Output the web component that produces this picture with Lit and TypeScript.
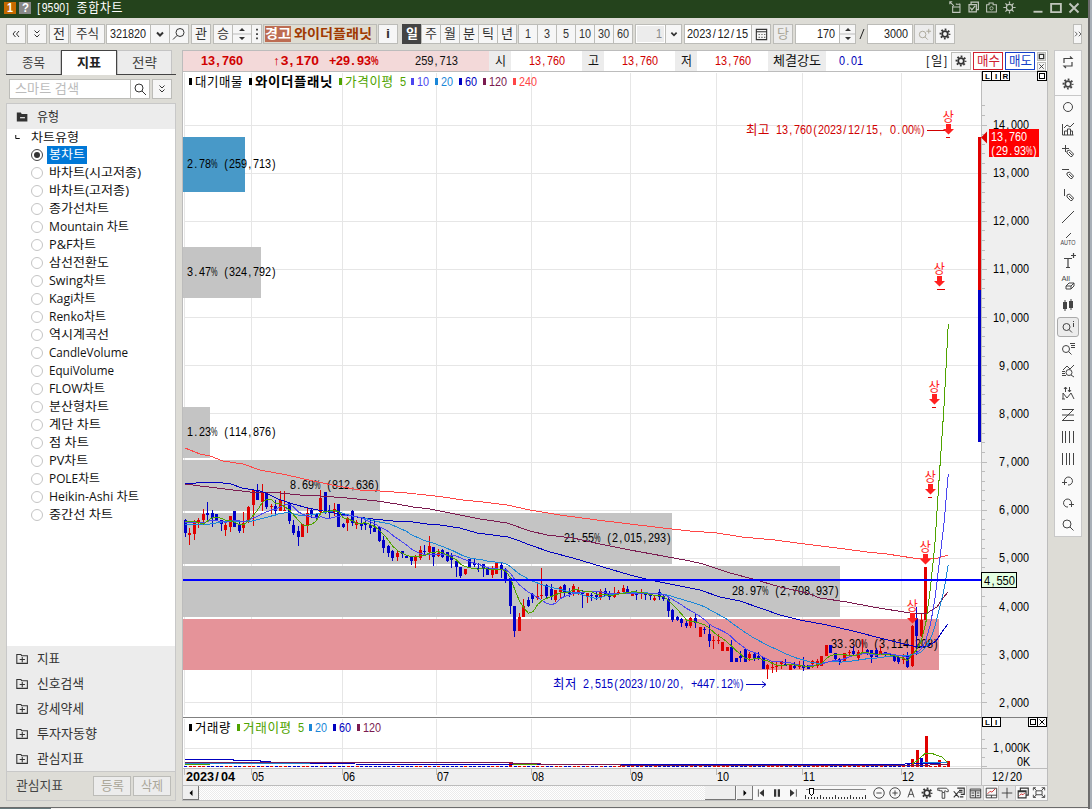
import { css, html, LitElement, svg } from "lit";
import type { SVGTemplateResult } from "lit";
import { customElement, property, state } from "lit/decorators.js";
import { classMap } from "lit/directives/class-map.js";

const fit = (text: string, width: number, cls = "") => html`
	<svg class="fit ${cls}" width=${width} height="16">
		<text x="0" y="11.500" textLength=${width} lengthAdjust="spacingAndGlyphs">${text}</text>
	</svg>
`;

const isHangul = (char: string) => /[\uac00-\ud7a3]/.test(char);

// Narrow glyphs are nudged towards the middle of their cell
const nudge: Record<string, number> = {
	",": 1.2,
	".": 1.2,
	"(": 1.2,
	"[": 1.2,
	")": 1,
	"]": 1,
	"/": 1.3,
};

// Hangul takes two cells, everything else one
const cellText = (
	x: number,
	y: number,
	width: number,
	text: string,
	color = "currentColor",
	cls = "",
) => {
	const chars = [...text];
	const total = chars.reduce((sum, char) => sum + (isHangul(char) ? 2 : 1), 0);
	const unit = width / total;
	const scale = unit / 7.2;
	let cell = 0;
	const spans = chars.map((char) => {
		const at = (cell * unit + (nudge[char] ?? 0)) / scale;
		if (isHangul(char)) {
			cell += 2;
			return svg`<tspan x=${at} textLength=${(unit * 2 - 0.6) / scale} lengthAdjust="spacingAndGlyphs">${char}</tspan>`;
		}
		cell += 1;
		return char === "%"
			? svg`<tspan x=${at} textLength="7.800" lengthAdjust="spacingAndGlyphs">${char}</tspan>`
			: svg`<tspan x=${at}>${char}</tspan>`;
	});
	return svg`<text class=${cls} fill=${color} transform="translate(${x} ${y}) scale(${scale} 1)">${spans}</text>`;
};

const mono = (text: string, width: number, cls = "") => html`
	<svg class="fit ${cls}" width=${width} height="16">${cellText(0, 11.5, width, text)}</svg>
`;

const icon = (body: SVGTemplateResult, size = 16) => html`
	<svg class="icon" width=${size} height=${size} viewBox="0 0 16 16">${body}</svg>
`;

const gear = svg`
	<circle cx="8" cy="8" r="3.2" stroke-width="2" />
	<circle cx="8" cy="8" r="5.2" stroke-width="2" stroke-dasharray="2.04 2.04" stroke-dashoffset="1" />
`;
const lens = svg`<circle cx="7" cy="7" r="4" /><path d="M10 10l4 4" />`;
const lensLeft = svg`<circle cx="9" cy="6.5" r="4" /><path d="M6 9.5l-4 4" />`;
const chevron = svg`<path d="M5 6.5l3 3 3-3" stroke-width="2" />`;
const doubleDown = svg`<path d="M5.5 4.500l2.500 2.500 2.500-2.500M5.500 8.500l2.500 2.500 2.500-2.500" />`;
const doubleLeft = svg`<path d="M7.500 5l-2.500 3 2.500 3M11 5l-2.500 3 2.500 3" />`;
const spinner = svg`
	<path class="solid" d="M5 5l3-3 3 3zM5 11l3 3 3-3z" />
	<path class="hair" d="M-2 8h20" />
`;
const pencil = svg`<path d="M7 8l2.500-1 4 4-1.500 2.500-1.500 0-3.500-3.500zM9 9l3 3" />`;

const base = css`
	* {
		box-sizing: border-box;
	}

	svg {
		display: block;
		flex: none;
	}

	.fit {
		overflow: visible;
		fill: currentColor;
		font-family: "Liberation Sans", "Noto Sans CJK KR", sans-serif;
		font-size: 13px;
	}

	.bold {
		font-weight: 700;
	}

	.icon {
		fill: none;
		stroke: currentColor;
		stroke-width: 1;
		overflow: visible;
	}

	.icon .solid {
		fill: currentColor;
		stroke: none;
	}

	.icon .hair {
		stroke: #bbb;
	}

	.icon text {
		fill: currentColor;
		stroke: none;
		font-family: "Liberation Sans", sans-serif;
	}

	.btn {
		display: flex;
		align-items: center;
		justify-content: center;
		flex: none;
		width: 20px;
		height: 20px;
		padding: 0;
		border: 1px solid #bcbcb8;
		background: #f6f6f6;
		color: #333;
		overflow: hidden;
	}
`;

interface TreeItem {
	name: string;
	width: number;
}

const chartTypes: TreeItem[] = [
	{ name: "봉차트", width: 36 },
	{ name: "바차트(시고저종)", width: 92 },
	{ name: "바차트(고저종)", width: 80 },
	{ name: "종가선차트", width: 60 },
	{ name: "Mountain 차트", width: 80 },
	{ name: "P&F차트", width: 47 },
	{ name: "삼선전환도", width: 60 },
	{ name: "Swing차트", width: 57 },
	{ name: "Kagi차트", width: 47 },
	{ name: "Renko차트", width: 57 },
	{ name: "역시계곡선", width: 60 },
	{ name: "CandleVolume", width: 79 },
	{ name: "EquiVolume", width: 65 },
	{ name: "FLOW차트", width: 56 },
	{ name: "분산형차트", width: 60 },
	{ name: "계단 차트", width: 52 },
	{ name: "점 차트", width: 40 },
	{ name: "PV차트", width: 39 },
	{ name: "POLE차트", width: 51 },
	{ name: "Heikin-Ashi 차트", width: 90 },
	{ name: "중간선 차트", width: 64 },
];

const folders: TreeItem[] = [
	{ name: "지표", width: 23 },
	{ name: "신호검색", width: 47 },
	{ name: "강세약세", width: 47 },
	{ name: "투자자동향", width: 60 },
	{ name: "관심지표", width: 47 },
];

@customElement("side-panel")
export class SidePanel extends LitElement {
	static override styles = [
		base,
		css`
			:host {
				display: flex;
				flex-direction: column;
				width: 170px;
				height: 751px;
				color: #333;
			}

			.tabs {
				display: flex;
				flex: none;
				height: 25px;
				border-bottom: 1px solid #444;
			}

			.tab {
				display: flex;
				align-items: center;
				justify-content: center;
				width: 55px;
				height: 24px;
				border: 1px solid #c4c4c4;
				border-bottom: 0;
				background: #ececec;
				color: #444;
			}

			.tab.active {
				width: 56px;
				height: 25px;
				border-color: #444;
				background: #fff;
				color: #222;
			}

			.search {
				display: flex;
				flex: none;
				padding: 4px 0 0 3px;
				height: 28px;
			}

			.search .field {
				display: flex;
				align-items: center;
				width: 122px;
				height: 20px;
				padding-left: 5px;
				border: 1px solid #bcbcb8;
				background: #fff;
				color: #bbb;
			}

			.search .find {
				margin: 0 2px 0 -1px;
				background: #fff;
			}

			.head {
				display: flex;
				align-items: center;
				flex: none;
				gap: 8px;
				height: 26px;
				padding-left: 9px;
				border: 1px solid #c8c8c8;
				border-bottom: 0;
				background: #ececec;
			}

			.tree {
				flex: 1;
				border: solid #c8c8c8;
				border-width: 0 1px;
				background: #fff;
				color: #111;
			}

			.root,
			.item {
				display: flex;
				align-items: center;
				height: 18px;
			}

			.root {
				gap: 8px;
				height: 17px;
				padding-left: 8px;
			}

			.item {
				padding-left: 24px;
				gap: 4px;
			}

			.radio {
				display: flex;
				align-items: center;
				justify-content: center;
				width: 12px;
				height: 12px;
				border: 1px solid #c4c4c4;
				border-radius: 50%;
			}

			.on .radio {
				border-color: #444;
			}

			.on .radio::after {
				content: "";
				width: 6px;
				height: 6px;
				border-radius: 50%;
				background: #333;
			}

			.name {
				padding: 1px 2px;
			}

			.name .fit,
			.root .fit {
				font-family: "Open Sans", "Noto Sans CJK KR", sans-serif;
				font-size: 12px;
			}

			.on .name {
				background: #0078d7;
				color: #fff;
			}

			.folders {
				flex: none;
				height: 125px;
				border: solid #c8c8c8;
				border-width: 0 1px;
				background: #ececec;
			}

			.folder {
				display: flex;
				align-items: center;
				gap: 8px;
				height: 25px;
				padding-left: 9px;
			}

			.foot {
				display: flex;
				align-items: center;
				flex: none;
				height: 30px;
				padding: 0 4px 0 9px;
				border: 1px solid #c8c8c8;
				background: #dddcd6;
				color: #444;
			}

			.foot .btn {
				width: 38px;
				margin-left: 2px;
				background: #ececec;
				color: #aaa698;
			}

			.foot .first {
				margin-left: auto;
			}
		`,
	];

	@state()
	private selected = "봉차트";

	override render() {
		return html`
			<div class="tabs">
				<div class="tab">${fit("종목", 23)}</div>
				<div class="tab active">${fit("지표", 24, "bold")}</div>
				<div class="tab">${fit("전략", 25)}</div>
			</div>
			<div class="search">
				<div class="field">${fit("스마트 검색", 64)}</div>
				<button class="btn find">${icon(lens)}</button>
				<button class="btn">${icon(doubleDown)}</button>
			</div>
			<div class="head">
				${icon(svg`
					<path class="solid" d="M1 3h5l1 2h7v9h-13z" />
					<path d="M5 9.500h6" stroke="#fff" stroke-width="1.300" />
				`, 13)}
				${fit("유형", 22)}
			</div>
			<div class="tree">
				<div class="root">
					${icon(svg`<path d="M1.500 2v7h8" stroke-width="2" />`, 8)}
					${fit("차트유형", 48)}
				</div>
				${chartTypes.map(
					(item) => html`
						<div
							class=${classMap({ item: true, on: item.name === this.selected })}
							@click=${() => {
								this.selected = item.name;
							}}
						>
							<span class="radio"></span>
							<span class="name">${fit(item.name, item.width)}</span>
						</div>
					`,
				)}
			</div>
			<div class="folders">
				${folders.map(
					(folder) => html`
						<div class="folder">
							${icon(svg`<path d="M1 3h5l1 1.500h7v9.500h-13zM4.500 9.300h6.500M7.700 6v6.500" stroke-width="1.300" />`, 13)}
							${fit(folder.name, folder.width)}
						</div>
					`,
				)}
			</div>
			<div class="foot">
				${fit("관심지표", 47)}
				<button class="btn first">${fit("등록", 23)}</button>
				<button class="btn">${fit("삭제", 22)}</button>
			</div>
		`;
	}
}

// direction, high, low, body top, body bottom
type Candle = [string, number, number, number, number];

// Each run is packed as scaled rows: dir, high, low, top, bottom against a base line
const unpack = (baseY: number, rows: string): Candle[] =>
	rows
		.trim()
		.split(/\s*;\s*/)
		.filter((row) => row)
		.map((row) => {
			const [dir, ...nums] = row.split(" ");
			const [hi, lo, top, bottom] = nums.map((n) => Math.round(baseY + Number(n) / 3));
			return [dir, hi, lo, top, bottom];
		});

const candles: Candle[] = [
	...unpack(
		440,
		`B 236 291 239 279;R 264 315 279 285;R 240 300 243 282;R 234 264 240 249;R 207 250 222 241;
		B 186 246 218 225;B 210 261 219 235;B 222 240 222 240;B 240 273 240 252;R 249 288 255 270;
		R 228 276 228 261;B 213 262 213 261;B 246 279 255 273;R 216 279 249 264;R 198 250 201 240;
		R 150 258 150 196;B 132 180 153 180;R 132 214 160 186;B 159 208 159 201;R 192 222 198 202;
		B 180 222 198 213;R 154 213 180 213;R 153 213 210 213;B 186 252 189 243;B 240 285 255 279;
		B 258 318 273 291;R 252 291 252 291;R 204 279 218 255;B 204 235 210 222;B 220 237 222 231;
		R 150 225 174 216;B 156 222 156 219;B 195 237 210 219;R 189 228 208 216;B 192 261 192 261;
		B 249 264 252 262;R 231 273 234 249;B 210 258 213 249;R 240 267 246 255;B 231 270 249 258;
		B 243 270 249 256;B 240 282 255 264;B 240 276 265 276;B 258 306 261 303;B 288 339 300 324;
		B 315 351 318 339;B 330 363 333 354;R 330 363 339 352;B 333 354 333 341;B 347 354 347 354;
		B 348 375 350 363;R 345 384 350 363;R 318 360 330 354;B 315 345 333 336;R 288 360 318 336;
		B 321 378 321 351`,
	),
	...unpack(
		500,
		`R 147 171 158 168;B 147 174 150 171;B 155 186 157 184;B 160 204 165 180;B 180 230 183 201;
		B 201 234 201 228;R 207 224 207 221;B 176 204 178 201;B 178 201 188 194;B 190 217 203 207;
		B 192 231 192 207;B 201 225 201 225;R 198 234 207 225;R 186 222 188 221;B 190 234 195 210;
		B 205 248 207 240;B 231 342 234 318;B 318 411 318 393;R 339 393 351 393;R 297 351 318 351;
		B 291 321 300 318;B 279 309 282 297;R 249 300 288 294;R 204 297 285 288;B 252 294 255 288;
		B 252 300 267 291;R 270 306 270 300;R 258 294 262 276;B 252 288 255 276;B 264 291 276 282;
		R 252 288 258 282;R 261 285 270 276;B 270 324 276 282;R 279 309 279 291;B 279 303 285 289;
		B 276 300 285 291;R 267 300 273 294;B 264 288 273 287;B 273 300 282 291;R 261 294 282 291;
		R 270 282 276 280;R 255 282 264 276;B 258 282 267 276;R 276 288 279 288;B 270 300 280 285;
		R 267 297 278 281;B 276 300 281 285;B 279 300 282 289;R 288 303 294 300;B 267 300 277 290;
		B 282 303 288 296;B 291 351 297 333;B 327 366 330 360;B 348 363 351 360`,
	),
	...unpack(
		540,
		`B 234 261 237 250;B 243 265 249 258;R 231 264 234 258;B 222 264 234 250;R 262 291 262 291;
		B 261 282 267 271;B 255 321 282 304;R 288 327 301 304;R 283 312 300 302;R 306 333 306 333;
		R 321 333 321 333;B 300 366 321 366;B 354 366 354 366;B 333 366 348 354;B 327 366 327 366;
		R 336 363 342 354;B 336 363 342 354;B 336 360 348 354;B 351 387 351 387;R 373 417 375 387;
		R 366 399 381 384;R 366 396 378 382;R 363 387 363 373;B 358 378 373 378;R 372 390 372 390;
		B 366 387 378 384;R 363 387 378 382;B 351 393 375 384;B 375 387 375 387;R 360 384 364 373;
		R 357 384 363 379;R 347 378 347 378;R 315 348 315 348;B 315 339 315 339;B 339 363 339 357;
		B 354 375 357 366;R 339 366 339 363;R 331 345 336 340;B 318 348 333 343;R 330 360 337 354;
		R 297 342 336 340;B 327 345 330 340;B 330 369 330 351;B 324 351 330 351;R 318 345 333 342;
		B 336 348 337 345;B 340 345 340 345;B 342 366 345 363;B 348 372 351 366;R 342 372 354 360;
		B 336 384 345 380;R 255 381 258 378;B 201 345 234 288;R 222 291 240 288;R 81 240 81 240;
		R -129 -126 -129 -126;R -399 -396 -399 -396;R -753 -750 -753 -750;R -753 -750 -753 -750;
		R -1209 -1206 -1209 -1206`,
	),
];

const barX = (i: number) => 185.3 + i * 4.515;
const closeOf = ([dir, , , top, bottom]: Candle) => (dir === "R" ? top : bottom);

// The leading points stand for bars whose window begins before the first one drawn
const average = (span: number, lead: string) => {
	const points = [lead];
	for (let i = span - 1; i < candles.length; i++) {
		const sum = candles
			.slice(i - span + 1, i + 1)
			.reduce((acc, candle) => acc + closeOf(candle), 0);
		points.push(`${barX(i).toFixed(1)},${(sum / span).toFixed(1)}`);
	}
	return points.join(" ");
};

const averages = [
	{ color: "#ff4646", points: "185,448 200,454 210,456 223,461 243,464 260,470 287,475 313,481 337,486 360,490 380,491 407,493 440,496.500 463,500 483,502 507,505 530,510 560,515 597,520 630,524 663,528 690,531 717,533 742,537 775,540 797,543 813,545 837,548 867,552 887,554 913,558 927,558 938,558 948,555" },
	{ color: "#7b1b50", points: "185,484 200,486 217,488 233,490 250,492 280,493 300,495 320,496 347,498 377,501 397,504 413,507 430,509 450,513 480,519 507,523 530,531 547,535 573,538 600,544 630,550 663,556 690,561 703,564 730,573 753,579 780,587 807,593 820,598 847,602 873,607 910,613 927,613 937,607 943,598 948,592" },
	{ color: "#0000c0", points: "185,484 201,482.500 219,482.500 231,484 242,488 260,491 266,493 278,499 293,504 308,508 323,511 340,514 357,517 373,519 393,521 413,522 427,524 440,525 460,528 477,533 508,537 517,540 530,545 550,552 573,558 603,567 630,575 650,580 670,584 700,590 720,597 740,601 760,608 780,615 800,620 827,625 853,631 880,638 900,643 913,646 928,646 936,641 942,632 948,624" },
	{ color: "#1b87d8", points: average(20, "185,524 210,524 228,521 248,522 260,519") },
	{ color: "#4b46f0", points: average(10, "185,522 203,523 212,520") },
	{ color: "#4fa300", points: average(5, "185,522 195,521.500") },
];

const profile = [
	{ y: 137, h: 55, w: 62, color: "#4899c8", text: "2.78% (259,713)", x: 187, base: 167.500 },
	{ y: 247, h: 51, w: 78, color: "#c4c4c4", text: "3.47% (324,792)", x: 187, base: 275.500 },
	{ y: 407, h: 51, w: 27, color: "#c4c4c4", text: "1.23% (114,876)", x: 187, base: 435.500 },
	{ y: 460, h: 51, w: 197, color: "#c4c4c4", text: "8.69% (812,636)", x: 290, base: 488.500 },
	{ y: 513, h: 51, w: 489, color: "#c4c4c4", text: "21.55% (2,015,293)", x: 564, base: 541.500 },
	{ y: 566, h: 51, w: 657, color: "#c4c4c4", text: "28.97% (2,708,937)", x: 732, base: 594.500 },
	{ y: 619, h: 51, w: 756, color: "#e59399", text: "33.30% (3,114,208)", x: 831, base: 647.500 },
];

const months = [
	{ x: 184, name: "2023/04" },
	{ x: 251, name: "05" },
	{ x: 342, name: "06" },
	{ x: 436, name: "07" },
	{ x: 531, name: "08" },
	{ x: 630, name: "09" },
	{ x: 716, name: "10" },
	{ x: 802, name: "11" },
	{ x: 901, name: "12" },
];

const limitUps = [
	[912.5, 600],
	[925.5, 541],
	[930.5, 471],
	[934.5, 381],
	[939.5, 263],
	[948.5, 111],
];

// bar index to top edge, the other days barely rise above the base line
const volumeTops: Record<number, number> = {
	72: 762,
	160: 764,
	161: 759,
	162: 750,
	163: 758,
	164: 736,
	167: 760,
	169: 761,
};

interface Legend {
	x: number;
	width: number;
	text: string;
	color: string;
	bold?: boolean;
}

const priceLegend: Legend[] = [
	{ x: 189, width: 48, text: "대기매물", color: "#000" },
	{ x: 249, width: 78, text: "와이더플래닛", color: "#000", bold: true },
	{ x: 339, width: 61, text: "가격이평 5", color: "#4fa300" },
	{ x: 411, width: 12, text: "10", color: "#4b46f0" },
	{ x: 435, width: 12, text: "20", color: "#1b87d8" },
	{ x: 459, width: 12, text: "60", color: "#0000c0" },
	{ x: 483, width: 18, text: "120", color: "#7b1b50" },
	{ x: 513, width: 18, text: "240", color: "#ff4646" },
];

const volumeLegend: Legend[] = [
	{ x: 189, width: 36, text: "거래량", color: "#000" },
	{ x: 237, width: 61, text: "거래이평 5", color: "#4fa300" },
	{ x: 309, width: 12, text: "20", color: "#1b87d8" },
	{ x: 333, width: 12, text: "60", color: "#0000c0" },
	{ x: 357, width: 18, text: "120", color: "#7b1b50" },
];

const priceY = (price: number) => 125.5 + (14000 - price) * 0.04815;

@customElement("price-chart")
export class PriceChart extends LitElement {
	static override styles = [
		base,
		css`
			:host {
				display: block;
			}

			.chart {
				background: #fff;
				overflow: visible;
				font-family: "Liberation Sans", "Noto Sans CJK KR", sans-serif;
				font-size: 13px;
			}

			.crisp {
				shape-rendering: crispEdges;
			}

			.line {
				fill: none;
				stroke-width: 1;
			}

			.grid {
				stroke: #e6e6e6;
			}

			.tick {
				stroke: #bcbcbc;
			}

			.mini {
				fill: #fff;
				stroke: #000;
			}

			.small {
				font-size: 8px;
				font-weight: 700;
			}
		`,
	];

	private text(x: number, y: number, width: number, value: string, color = "#000", cls = "") {
		return cellText(x, y, width, value, color, cls);
	}

	private legend(items: Legend[], y: number) {
		return items.map(
			(item) => svg`
				<rect x=${item.x} y=${y - 8} width="3" height="7" fill=${item.color} />
				${this.text(item.x + 6, y, item.width, item.text, item.color, item.bold ? "bold" : "")}
			`,
		);
	}

	private grid() {
		const prices = Array.from({ length: 13 }, (_, i) => 14000 - i * 1000);
		return svg`
			<g class="crisp grid">
				${months.map((m) => svg`<path d="M${m.x + 0.5} 73V715M${m.x + 0.5} 719V767" />`)}
				${prices.map((p) => svg`<path d="M184 ${Math.round(priceY(p)) - 0.5}H981" />`)}
				<path d="M184 748.500H981M184 766.500H981" />
			</g>
		`;
	}

	private profileBars() {
		return profile.map(
			(p) => svg`<rect x="183" y=${p.y} width=${p.w} height=${p.h} fill=${p.color} />`,
		);
	}

	private candle([dir, high, low, top, bottom]: Candle, i: number) {
		const color = dir === "R" ? "#e00000" : "#0000c8";
		const x = Math.round(barX(i) - 0.5);
		const limit = i > 164;
		const width = limit ? 4 : 3;
		return svg`
			<rect x=${x} y=${high} width="1" height=${Math.max(low - high, 1)} fill=${color} />
			<rect x=${x - (limit ? 2 : 1)} y=${top} width=${width} height=${Math.max(bottom - top, 1)} fill=${color} />
		`;
	}

	private volumes() {
		return candles.map(([dir], i) => {
			const top = volumeTops[i] ?? 765.5;
			const red = i === 72 || i === 162 || (dir === "R" && i !== 163);
			return svg`<rect x=${Math.round(barX(i)) - 1} y=${top} width="3" height=${767 - top} fill=${red ? "#e00000" : "#0000c8"} />`;
		});
	}

	private axis() {
		const ticks = Array.from({ length: 66 }, (_, i) => 14400 - i * 200).filter((p) => p >= 2000);
		const prices = Array.from({ length: 13 }, (_, i) => 14000 - i * 1000);
		return svg`
			<rect x="981" y="72" width="67" height="714" fill="#efefef" />
			<rect x="183" y="768" width="865" height="18" fill="#efefef" />
			<g class="crisp tick">
				<path d="M981.500 72V786M183 768.500H1048M183 785.500H1048M1047.500 72V786" />
				<path d="M982 739.500h3M982 748.500h5M982 757.500h3M982 766.500h5" />
				${ticks.map((p) => svg`<path d="M982 ${Math.round(priceY(p)) - 0.5}h${p % 1000 ? 3 : 5}" />`)}
				${months.map((m) => svg`<path d="M${m.x + 0.5} 769v6" />`)}
			</g>
			${prices.map((p) => {
				const label = p.toLocaleString("en-US");
				const width = label.length * 6;
				return this.text(1029 - width, priceY(p) + 3.5, width, label);
			})}
			${months.map((m, i) =>
				i === 0
					? this.text(186, 780.5, 49, m.name, "#000", "bold")
					: this.text(m.x + 1, 780.5, 12, m.name),
			)}
			${this.text(992, 780.5, 30, "12/20")}
			${this.text(993, 752, 36, "1,000K")}
			${this.text(1017, 766, 12, "0K")}
		`;
	}

	private minis() {
		return svg`
			<g class="crisp">
				<path class="mini" d="M982.500 71.500h27v9h-27zM991.500 71.500v9M1000.500 71.500v9" />
				<path class="mini" d="M1037.500 71.500h9v9h-9zM1039.500 73.500h5v5h-5z" />
				<path class="mini" d="M982.500 717.500h18v9h-18zM991.500 717.500v9" />
				<path class="mini" d="M1028.500 717.500h18v9h-18zM1037.500 717.500v9M1030.500 719.500h5v5h-5z" />
			</g>
			<path d="M1039.500 719.500l5 5M1044.500 719.500l-5 5" stroke="#000" />
			<text class="small" x="985" y="79">L</text>
			<text class="small" x="995" y="79">I</text>
			<text class="small" x="1002.500" y="79">R</text>
			<text class="small" x="985" y="725">L</text>
			<text class="small" x="995" y="725">I</text>
		`;
	}

	override render() {
		return html`
			<svg class="chart" width="865" height="714" viewBox="183 72 865 714">
				${this.grid()} ${this.profileBars()}
				${profile.map((p) => this.text(p.x, p.base, p.text.length * 6, p.text))}
				<g class="crisp">
					${candles.map((c, i) => this.candle(c, i))}
					${averages.map((a) => svg`<polyline class="line" points=${a.points} stroke=${a.color} />`)}
					<rect x="183" y="579" width="798" height="2" fill="#0000ff" />
				</g>
				${this.axis()}
				<g class="crisp">
					<path d="M183 717.500H1048" stroke="#808080" />
					${this.volumes()}
					<path class="line" stroke="#0000c0" d="M185 759.500h48v1h27v1h10v2h40l90 1h500l10-1h30" />
					<path class="line" stroke="#1b87d8" d="M185 763.500h125M922 762.500h26" />
					<path class="line" stroke="#4fa300" d="M185 764.500h25M513 764.500h24M912 764L918 760 925 753.500 932 753.500 942 757 948 763" />
					<path class="line" stroke="#7b1b50" d="M185 762.500h327v1h28v1h80v1h300l20-1h8" />
					<rect x="978" y="137" width="3" height="153" fill="#e00000" />
					<rect x="978" y="290" width="3" height="152" fill="#0000c8" />
				</g>
				<path d="M981 137.500l6-6v12z" fill="#e00000" />
				<rect x="989" y="129" width="50" height="28" fill="#ff0000" />
				${this.text(991, 141, 36, "13,760", "#fff")}
				${this.text(990, 155, 48, "(29.93%)", "#fff")}
				<rect class="crisp" x="981.500" y="572.500" width="35" height="15" fill="#e4ffe2" stroke="#000" />
				${this.text(984, 585, 31, "4,550")}
				${this.text(746, 133.500, 180, "최고 13,760(2023/12/15, 0.00%)", "#d00000")}
				${this.text(553, 688, 192, "최저 2,515(2023/10/20, +447.12%)", "#0000c0")}
				<path class="line" stroke="#d00000" d="M927 130.500h18" />
				<path class="line" stroke="#0000c0" d="M746 684.500h20M762 681.500l4 3-4 3" />
				${limitUps.map(
					([x, y]) => svg`
						${this.text(x - 6, y + 10, 12, "상", "#ff2020")}
						<path d="M${x - 2.5} ${y + 13}h5v5h3l-5.500 5.500-5.500-5.500h3z" fill="#ff2020" />
					`,
				)}
				${this.legend(priceLegend, 86)} ${this.legend(volumeLegend, 732)} ${this.minis()}
			</svg>
		`;
	}
}

const drawingTools: SVGTemplateResult[] = [
	svg`<path d="M4 9v-4.500h8l-2-2M12 8v4h-8l2 2" stroke-width="1.200" />`,
	svg`<g transform="translate(1 1) scale(0.88)">${gear}</g>`,
	svg`<circle cx="8" cy="8" r="4.500" />`,
	svg`<path d="M2.500 3v11h11M4.500 14v-4h3v4M7.500 14v-6h3v6M10.500 14v-4h2v4M4 7l3-3 3 2 4-4" />`,
	svg`<path d="M2 5.500h7M5.500 2v7" />${pencil}`,
	svg`<path d="M2 4.500h7" />${pencil}`,
	svg`<path d="M4.500 2v7" />${pencil}`,
	svg`<path d="M2 14l12-12" />`,
	svg`<path d="M6 7l5-5" /><text x="0.500" y="14" font-size="7.500" textLength="15" lengthAdjust="spacingAndGlyphs">AUTO</text>`,
	svg`<path d="M4 5.500h8M8 5.500v9M6 14.500h4M11 2.500h5M13.500 0v5" stroke-width="1.200" />`,
	svg`<text x="1.500" y="6" font-size="7.500">All</text><path d="M6 11l3-3h5v3l-3 3h-5zM6 11h5v3M11 11l3-3" />`,
	svg`<path class="solid" d="M3 5h4v7h-4zM9 4h4v7h-4z" /><path d="M5 3v11M11 2v11" />`,
	svg`<circle cx="6.500" cy="8" r="3.500" /><path d="M9 10.500l3 3M13.500 4v4M13.500 2v1" />`,
	svg`<circle cx="6" cy="8" r="3.500" /><path d="M8.500 10.500l3 3M10 2.500h5M11 4.500h4M11 6.500h4" />`,
	svg`<path d="M3 7l4-4 3 3 4-4M2 8.500h3M2 10.500h3M2 12.500h4" /><circle cx="9" cy="9.500" r="3" /><path d="M11 12l3 2" />`,
	svg`<path d="M3 14v-6l4 5 4-5 3 6M2 14h3M5.500 2v5M4 4l1.500-2 1.500 2M9.500 2v5M8 5l1.500 2 1.500-2" />`,
	svg`<path d="M2 2.500h12M2 8h12M2 13.500h12M13 3L3 13" />`,
	svg`<path d="M2.500 2v12M5.500 2v12M9.500 2v12M13.500 2v12" />`,
	svg`<path d="M2.500 2v12M6.500 2v12M9.500 2v12M13.500 2v12" />`,
	svg`<path d="M5 10a4 4 0 1 1 3 2M2 9.500h5M4.500 8v4" />`,
	svg`<path d="M11 10a4 4 0 1 0-3 2M9 9.500h5M11.500 8v4" />`,
	svg`<circle cx="7" cy="7" r="4" /><path d="M10 10l3.500 3.500" />`,
];

@customElement("tool-strip")
export class ToolStrip extends LitElement {
	static override styles = [
		base,
		css`
			:host {
				display: flex;
				flex-direction: column;
				align-items: center;
				width: 28px;
				height: 487px;
				border: 1px solid #c8c8c8;
				background: #fafafa;
				color: #444;
			}

			.cell {
				display: flex;
				flex: none;
				align-items: center;
				justify-content: center;
				width: 26px;
				height: 22px;
			}

			.cell:nth-child(2) {
				height: 23px;
				border-bottom: 1px solid #c8c8c8;
			}

			.picked {
				width: 22px;
				height: 20px;
				margin: 1px 0;
				border: 1px solid #aaa;
				border-radius: 3px;
				background: #ececec;
			}
		`,
	];

	@property({ type: Number })
	picked = 12;

	override render() {
		return drawingTools.map(
			(tool, i) => html`
				<div class=${classMap({ cell: true, picked: i === this.picked })}>${icon(tool)}</div>
			`,
		);
	}
}

const titleIcons = [
	svg`<path d="M4.500 6v8h9v-10h-5M4.500 7.500h9M1 1l5 5M1 4v-3h3M9 4v-1M13 4v-1" stroke-width="1.300" />`,
	svg`<path d="M2.500 4.500h9v9h-9zM5 4v-2.500h9v9h-2M4 8l2 3 4-5" stroke-width="1.500" />`,
	svg`<path d="M2 4.500h3v-2h5v2h4v9h-12z" stroke-width="1.300" /><circle cx="8" cy="9" r="2" />`,
	svg`<circle cx="8" cy="8" r="3.800" stroke-width="1.500" /><path d="M8 0.500v3M8 12.500v3M0.500 8h3M12.500 8h3M3 3l2 2M11 11l2 2M3 13l2-2M11 5l2-2" stroke-width="1.500" />`,
];

const bottomTools = [
	{ art: svg`<circle cx="8" cy="8" r="6" /><path d="M5 8h6" />` },
	{ art: svg`<circle cx="8" cy="8" r="6" /><path d="M5 8h6M8 5v6" />` },
	{ art: svg`<path d="M4.500 13l3.500-10 3.500 10M5.500 9.500h5" />` },
	{ art: gear },
	{ art: svg`<path d="M2 5v-2.500h10l2 2v2h-2l-1-1h-1v2h-3v-2h-3v-1zM7 8v6h3v-6" />` },
	{ art: svg`<path d="M6 2.500h8v7h-4M8 5h4M8 7h4M2 6l6 7M8 6l-6 7M9 12.500h4" stroke-width="1.300" />` },
	{ art: svg`<path d="M2.500 3.500h12v10h-12zM2.500 5.500h12M8.500 5.500v8M4 8h3M4 11h3M10 8h3M10 11h3" />`, on: true },
	{ art: svg`<path d="M2.500 2.500h12v11h-12zM2.500 10.500h12M8.500 10.500v3" /><path d="M4 9l3-3 2 1 4-4" stroke="#d02020" />` },
	{ art: svg`<path d="M2 8h12M8 2v12" />`, on: true },
	{ art: svg`<path d="M5 5v-2.500h9v8h-2M2.500 5.500h9v8h-9zM2.500 6.500h9" stroke-width="1.300" /><path d="M4 11l2-2 2 1 2-2" stroke="#d02020" />` },
	{ art: svg`<path d="M1.500 5v-3h3M11 2h3.500v3M14.500 10v3h-3.500M4.500 13h-3v-3M4.500 5.500h7v4.500h-7zM2 2l3 3M14 2l-3 3M14 13l-3-3M2 13l3-3" />` },
];

@customElement("app-root")
export class AppRoot extends LitElement {
	static override styles = [
		base,
		css`
			:host {
				display: flex;
				width: 1092px;
				height: 809px;
				overflow: hidden;
				background: #dddcd6;
				color: #222;
			}

			.window {
				display: flex;
				flex-direction: column;
				width: 1088px;
			}

			.edge {
				width: 4px;
				border-left: 2px solid #6c6c6c;
				background: #a9b0b8;
			}

			.title {
				display: flex;
				align-items: center;
				flex: none;
				height: 18px;
				padding: 0 8px 3px 4px;
				background: #24431c;
				color: #fff;
			}

			.badge {
				display: flex;
				align-items: center;
				justify-content: center;
				width: 12px;
				height: 12px;
				margin-right: 3px;
				background: #c56a00;
			}

			.badge.help {
				margin-right: 5px;
				background: #888;
			}

			.badge .fit {
				font-size: 12px;
			}

			.title-icons {
				display: flex;
				align-items: center;
				gap: 5px;
				margin-left: auto;
				color: #c0c6bc;
			}

			.window-icons {
				display: flex;
				gap: 6px;
				margin-left: 16px;
				color: #c0c6bc;
			}

			.toolbar {
				display: flex;
				align-items: center;
				flex: none;
				gap: 1px;
				height: 32px;
				padding: 0 6px;
			}

			.sp {
				margin-left: 1px;
			}

			.group {
				display: flex;
				flex: none;
			}

			.group > * + * {
				margin-left: -1px;
			}

			.field {
				display: flex;
				align-items: center;
				flex: none;
				height: 20px;
				padding: 0 3px;
				border: 1px solid #bcbcb8;
				background: #fff;
			}

			.code {
				width: 45px;
			}

			.stock {
				width: 35px;
			}

			.dots {
				width: 11px;
			}

			.company {
				width: 114px;
				padding: 0 0 0 1px;
				background: #dedcd2;
				color: #a03800;
			}

			.warn {
				display: flex;
				align-items: center;
				height: 16px;
				margin-right: 3px;
				background: #bd6c52;
				color: #fff;
			}

			.mid {
				margin-left: 3px;
			}

			.dark {
				border-color: #444;
				background: #444;
				color: #fff;
			}

			.unit {
				width: 31px;
				justify-content: flex-end;
				background: #ececec;
				color: #888;
				box-shadow: inset 0 0 0 1px #fff;
			}

			.drop {
				width: 17px;
			}

			.date {
				width: 68px;
				padding: 0 2px;
			}

			.off {
				background: #ececec;
				color: #aaa698;
			}

			.count {
				width: 45px;
				justify-content: flex-end;
				padding-right: 4px;
			}

			.total {
				width: 46px;
				justify-content: flex-end;
				padding-right: 4px;
			}

			.spin {
				width: 17px;
			}

			.slash {
				display: flex;
				flex: none;
				width: 9px;
				padding-left: 2px;
			}

			.more {
				width: 9px;
				margin-left: auto;
			}

			.main {
				display: flex;
				align-items: flex-start;
				flex: none;
				gap: 6px;
				height: 757px;
				padding-left: 6px;
			}

			.panel {
				width: 866px;
				height: 751px;
				border: solid #bcbcbc;
				border-width: 1px 0 1px 1px;
				background: #fff;
			}

			.quote {
				display: flex;
				height: 21px;
				border-bottom: 1px solid #bcbcbc;
				border-right: 1px solid #bcbcbc;
			}

			.quote > div {
				display: flex;
				align-items: center;
				justify-content: center;
			}

			.last {
				width: 306px;
				padding-right: 14px;
				background: #f3d9d9;
				color: #d00000;
			}

			.change {
				display: flex;
				gap: 10px;
				margin: 0 37px 0 30px;
			}

			.volume {
				color: #111;
			}

			.cap {
				width: 22px;
				background: #ececec;
				color: #111;
			}

			.cap.wide {
				width: 58px;
			}

			.val {
				width: 71px;
				color: #d00000;
			}

			.strength {
				width: 50px;
				color: #0000b8;
			}

			.actions {
				flex: 1;
				gap: 2px;
				justify-content: flex-end !important;
				padding-right: 1px;
			}

			.actions .btn {
				height: 18px;
			}

			.actions .trade {
				width: 30px;
				background: #fff;
			}

			.actions .buy {
				border-color: #d02030;
				color: #d02030;
			}

			.actions .sell {
				border-color: #1540c8;
				color: #1540c8;
			}

			.stack {
				display: flex;
				flex-direction: column;
				gap: 1px;
			}

			.actions .stack .btn {
				width: 9px;
				height: 9px;
			}

			.scroll {
				display: flex;
				align-items: center;
				height: 14px;
				border-right: 1px solid #bcbcbc;
				background: #f8f8f8;
				color: #333;
			}

			.knob {
				display: flex;
				align-items: center;
				justify-content: center;
				flex: none;
				width: 16px;
				height: 14px;
				border: solid #777;
				border-width: 0 1px 1px 0;
				background: #efefef;
				color: #000;
			}

			.track {
				flex: none;
				width: 506px;
				height: 14px;
				background: repeating-conic-gradient(#ebebeb 0 25%, #fff 0 50%) 0 0 / 2px 2px;
			}

			.thumb {
				width: 31px;
				margin-right: 1px;
			}

			.cell {
				display: flex;
				align-items: center;
				justify-content: center;
				flex: none;
				width: 16px;
				height: 14px;
			}

			.cell.on {
				background: #e4e4e4;
				box-shadow: 0 0 0 1px #c4c4c4;
			}

			.slider {
				margin: 0 4px;
			}

			.below {
				display: flex;
				flex: none;
				height: 2px;
				border-top: 1px solid #6c6c6c;
				background: #f4f2f0;
			}

			.below span {
				width: 51px;
				background: #66787c;
			}
		`,
	];

	@state()
	private period = "일";

	private titleBar() {
		return html`
			<div class="title">
				<span class="badge">${fit("1", 6, "bold")}</span>
				<span class="badge help">${fit("?", 7, "bold")}</span>
				${mono("[9590] 종합차트", 87)}
				<div class="title-icons">${titleIcons.map((art) => icon(art, 13))}</div>
				<div class="window-icons">
					${icon(svg`<path d="M2 13h12" stroke-width="2.500" />`, 12)}
					${icon(svg`<path d="M1.500 2.500h13v11h-13z" stroke-width="2.500" />`, 12)}
					${icon(svg`<path d="M2 2l12 12M14 2l-12 12" stroke-width="2.500" />`, 12)}
				</div>
			</div>
		`;
	}

	private toolbar() {
		return html`
			<div class="toolbar">
				<button class="btn">${icon(doubleLeft)}</button>
				<button class="btn">${icon(doubleDown)}</button>
				<button class="btn sp">${fit("전", 12)}</button>
				<button class="btn stock">${fit("주식", 23)}</button>
				<div class="group">
					<div class="field code">${mono("321820", 36)}</div>
					<button class="btn">${icon(chevron)}</button>
					<button class="btn">${icon(lensLeft)}</button>
				</div>
				<button class="btn sp">${fit("관", 12)}</button>
				<div class="group sp">
					<button class="btn">${fit("승", 12)}</button>
					<button class="btn">${icon(spinner)}</button>
					<button class="btn dots">
						${icon(svg`<path class="solid" d="M7 2h2v2h-2zM7 7h2v2h-2zM7 12h2v2h-2z" />`, 14)}
					</button>
				</div>
				<div class="field company">
					<span class="warn">${fit("경고", 26, "bold")}</span>
					${fit("와이더플래닛", 78, "bold")}
				</div>
				<button class="btn">${fit("i", 4, "bold")}</button>
				<div class="group mid">
					${["일", "주", "월", "분", "틱", "년"].map(
						(name) => html`
							<button
								class=${classMap({ btn: true, dark: name === this.period })}
								@click=${() => {
									this.period = name;
								}}
							>
								${fit(name, 12, name === this.period ? "bold" : "")}
							</button>
						`,
					)}
				</div>
				<div class="group">
					${["1", "3", "5", "10", "30", "60"].map(
						(n) => html`<button class="btn">${mono(n, n.length * 6)}</button>`,
					)}
				</div>
				<div class="group sp">
					<div class="field unit">${mono("1", 6)}</div>
					<button class="btn drop">${icon(chevron, 14)}</button>
				</div>
				<div class="group sp">
					<div class="field date">${mono("2023/12/15", 61)}</div>
					<button class="btn">
						${icon(svg`<path d="M2.500 2.500h11v11h-11zM2.500 5h11M5 8h1M8 8h1M11 8h1M5 11h1M8 11h1M11 11h1" stroke-width="1.200" />`, 15)}
					</button>
				</div>
				<button class="btn off sp">${fit("당", 12)}</button>
				<div class="group sp">
					<div class="field count">${mono("170", 18)}</div>
					<button class="btn spin">${icon(spinner)}</button>
				</div>
				<div class="slash">
					<svg class="icon" width="7" height="14" viewBox="0 0 7 14">
						<path d="M1 12l4-10" />
					</svg>
				</div>
				<div class="field total">${mono("3000", 24)}</div>
				<button class="btn off">
					${icon(svg`<circle cx="6" cy="8" r="3.500" /><path d="M8.500 10.500l3 3M10 4.500h5M12.500 2v5" />`, 15)}
				</button>
				<button class="btn">${icon(gear, 14)}</button>
				<button class="btn more">${icon(svg`<path d="M4 5l3 3-3 3M9 5l3 3-3 3" />`, 12)}</button>
			</div>
		`;
	}

	private quote() {
		const prices = ["시", "고", "저"];
		return html`
			<div class="quote">
				<div class="last">
					${mono("13,760", 42, "bold")}
					<span class="change">
						${mono("↑3,170", 46, "bold")} ${mono("+29.93%", 49, "bold")}
					</span>
					<span class="volume">${mono("259,713", 43)}</span>
				</div>
				${prices.map(
					(name) => html`
						<div class="cap">${fit(name, 11)}</div>
						<div class="val">${mono("13,760", 36)}</div>
					`,
				)}
				<div class="cap wide">${fit("체결강도", 48)}</div>
				<div class="strength">${mono("0.01", 24)}</div>
				<div class="actions">
					${mono("[일]", 24)}
					<button class="btn">${icon(gear, 14)}</button>
					<button class="btn trade buy">${fit("매수", 23)}</button>
					<button class="btn trade sell">${fit("매도", 23)}</button>
					<span class="stack">
						<button class="btn">${icon(svg`<path d="M3 3h10v10h-10z" stroke-width="3" />`, 7)}</button>
						<button class="btn">${icon(svg`<path d="M3 3l10 10M13 3l-10 10" stroke-width="2" />`, 7)}</button>
					</span>
				</div>
			</div>
		`;
	}

	private scrollRow() {
		const marks = Array.from({ length: 21 }, (_, i) => i);
		return html`
			<div class="scroll">
				<span class="knob">${icon(svg`<path class="solid" d="M10 4v8l-4-4z" />`, 12)}</span>
				<span class="track"></span>
				<span class="knob thumb"></span>
				<span class="knob">${icon(svg`<path class="solid" d="M6 4v8l4-4z" />`, 12)}</span>
				<span class="cell">${icon(svg`<path d="M4.500 3v10" /><path class="solid" d="M12 3v10l-6-5z" />`, 12)}</span>
				<span class="cell">${icon(svg`<path class="solid" d="M4 3h3v10h-3zM9 3h3v10h-3z" />`, 12)}</span>
				<span class="cell">${icon(svg`<path d="M12.500 3v10" /><path class="solid" d="M4 3v10l6-5z" />`, 12)}</span>
				<svg class="slider" width="62" height="14" shape-rendering="crispEdges">
					<path d="M1 3.500h60" stroke="#888" />
					${marks.map((i) => svg`<rect x=${i * 3} y=${i % 5 ? 11 : 9} width="1" height=${i % 5 ? 2 : 4} fill="#333" />`)}
					<path d="M4.500 2.500h4v5l-2 2-2-2z" fill="#fff" stroke="#000" />
				</svg>
				${bottomTools.map(
					(tool) => html`
						<span class=${classMap({ cell: true, on: !!tool.on })}>${icon(tool.art, 14)}</span>
					`,
				)}
			</div>
		`;
	}

	override render() {
		return html`
			<div class="window">
				${this.titleBar()} ${this.toolbar()}
				<div class="main">
					<side-panel></side-panel>
					<div class="panel">
						${this.quote()}
						<price-chart></price-chart>
						${this.scrollRow()}
					</div>
					<tool-strip></tool-strip>
				</div>
				<div class="below"><span></span></div>
			</div>
			<div class="edge"></div>
		`;
	}
}

declare global {
	interface HTMLElementTagNameMap {
		"app-root": AppRoot;
		"side-panel": SidePanel;
		"price-chart": PriceChart;
		"tool-strip": ToolStrip;
	}
}
